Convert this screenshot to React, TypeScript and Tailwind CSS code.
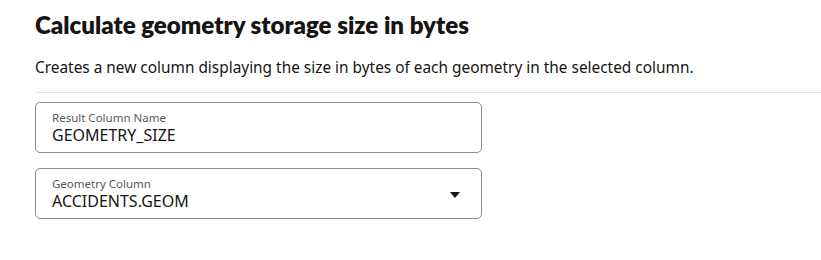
export default function App() {
    return (
        <div className="h-[260px] w-[821px] bg-white pl-[35px] pt-[8px] text-[#161513] font-['Noto_Sans',sans-serif]">
            <h1 className="font-['Lato',sans-serif] text-[24.1px] font-extrabold leading-[34px]">Calculate geometry storage size in bytes</h1>
            <p className="mt-[15px] text-[15.4px] leading-[22px]">
                Creates a new column displaying the size in bytes of each geometry in the selected column.
            </p>
            <div className="mt-[13px] h-px bg-[#e4e3e1]" />
            <div className="mt-[9px] flex flex-col gap-[15px]">
                <Field label="Result Column Name" value="GEOMETRY_SIZE" />
                <Field label="Geometry Column" value="ACCIDENTS.GEOM" select />
            </div>
        </div>
    );
}

function Field({ label, value, select }: { label: string; value: string; select?: boolean }) {
    return (
        <div className="flex h-[51px] w-[447px] items-center rounded-[5px] border border-[#8f8d8a] pl-[16px] pr-[21px]">
            <div className="flex-1">
                <div className="text-[11.5px] leading-[14px] text-[#5b5957]">{label}</div>
                <div className="text-[16px] leading-[20px]">{value}</div>
            </div>
            {select && (
                <svg width="10" height="6" viewBox="0 0 10 6" className="mt-[2px]">
                    <path d="M0 0h10L5 6z" fill="#161513" />
                </svg>
            )}
        </div>
    );
}
